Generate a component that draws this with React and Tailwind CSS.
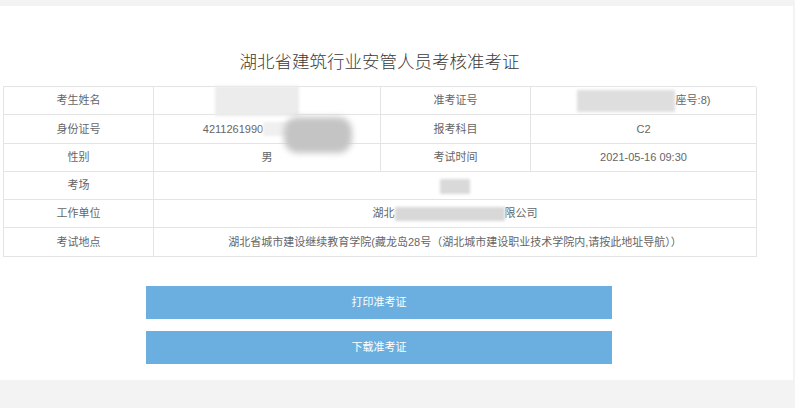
import React from "react";

const font = { fontFamily: '"Liberation Sans", "Noto Sans CJK SC", sans-serif' };

function Cell({ children, className = "" }) {
  return (
    <div
      className={
        "flex items-center justify-center border-r border-b border-[#e4e4e4] text-[11px] text-[#666] whitespace-nowrap " +
        className
      }
    >
      {children}
    </div>
  );
}

function Patch({ className = "" }) {
  return <span className={"inline-block blur-[1.5px] " + className} />;
}

export default function App() {
  return (
    <div
      className="w-[795px] h-[408px] bg-[#f3f3f3] pt-[6px] pr-[2px] overflow-hidden"
      style={font}
    >
      <div className="bg-white h-[374px] flex flex-col">
        <div className="pt-[43px] h-[80px] ml-[3px] w-[753px] text-center text-[17.5px] leading-[26px] text-[#3a3a3a] font-light">
          湖北省建筑行业安管人员考核准考证
        </div>
        <div className="relative ml-[3px] w-[753px] border-l border-t border-[#e4e4e4] grid grid-cols-[150px_227px_150px_226px] grid-rows-[28px_29px_28px_28px_28px_29px]">
          <Cell>考生姓名</Cell>
          <Cell>
            <Patch className="w-[84px] h-[30px] bg-[#ececec] ml-[-20px]" />
          </Cell>
          <Cell>准考证号</Cell>
          <Cell>
            <Patch className="w-[98px] h-[22px] bg-[#dedede]" />
            <span className="ml-[1px]">座号:8)</span>
          </Cell>

          <Cell>身份证号</Cell>
          <Cell>
            <span className="ml-[-12px]">4211261990</span>
            <Patch className="w-[56px] h-[14px] bg-[#f0f0f0]" />
          </Cell>
          <Cell>报考科目</Cell>
          <Cell>C2</Cell>

          <Cell>性别</Cell>
          <Cell>男</Cell>
          <Cell>考试时间</Cell>
          <Cell>2021-05-16 09:30</Cell>

          <Cell>考场</Cell>
          <Cell className="col-span-3">
            <Patch className="w-[30px] h-[15px] bg-[#d9d9d9] mt-[2px]" />
          </Cell>

          <Cell>工作单位</Cell>
          <Cell className="col-span-3">
            <span>湖北</span>
            <Patch className="w-[110px] h-[14px] bg-[#d8d8d8]" />
            <span>限公司</span>
          </Cell>

          <Cell>考试地点</Cell>
          <Cell className="col-span-3">
            湖北省城市建设继续教育学院(藏龙岛28号（湖北城市建设职业技术学院内,请按此地址导航））
          </Cell>

          <div className="absolute left-[280px] top-[30px] w-[68px] h-[36px] rounded-[14px] bg-[#c4c4c4] blur-[3px]" />
        </div>

        <div className="ml-[146px] mt-[29px] w-[466px] flex flex-col gap-[12px]">
          <div className="h-[33px] bg-[#6aafe0] flex items-center justify-center text-white text-[11px]">
            打印准考证
          </div>
          <div className="h-[33px] bg-[#6aafe0] flex items-center justify-center text-white text-[11px]">
            下载准考证
          </div>
        </div>
      </div>
    </div>
  );
}
